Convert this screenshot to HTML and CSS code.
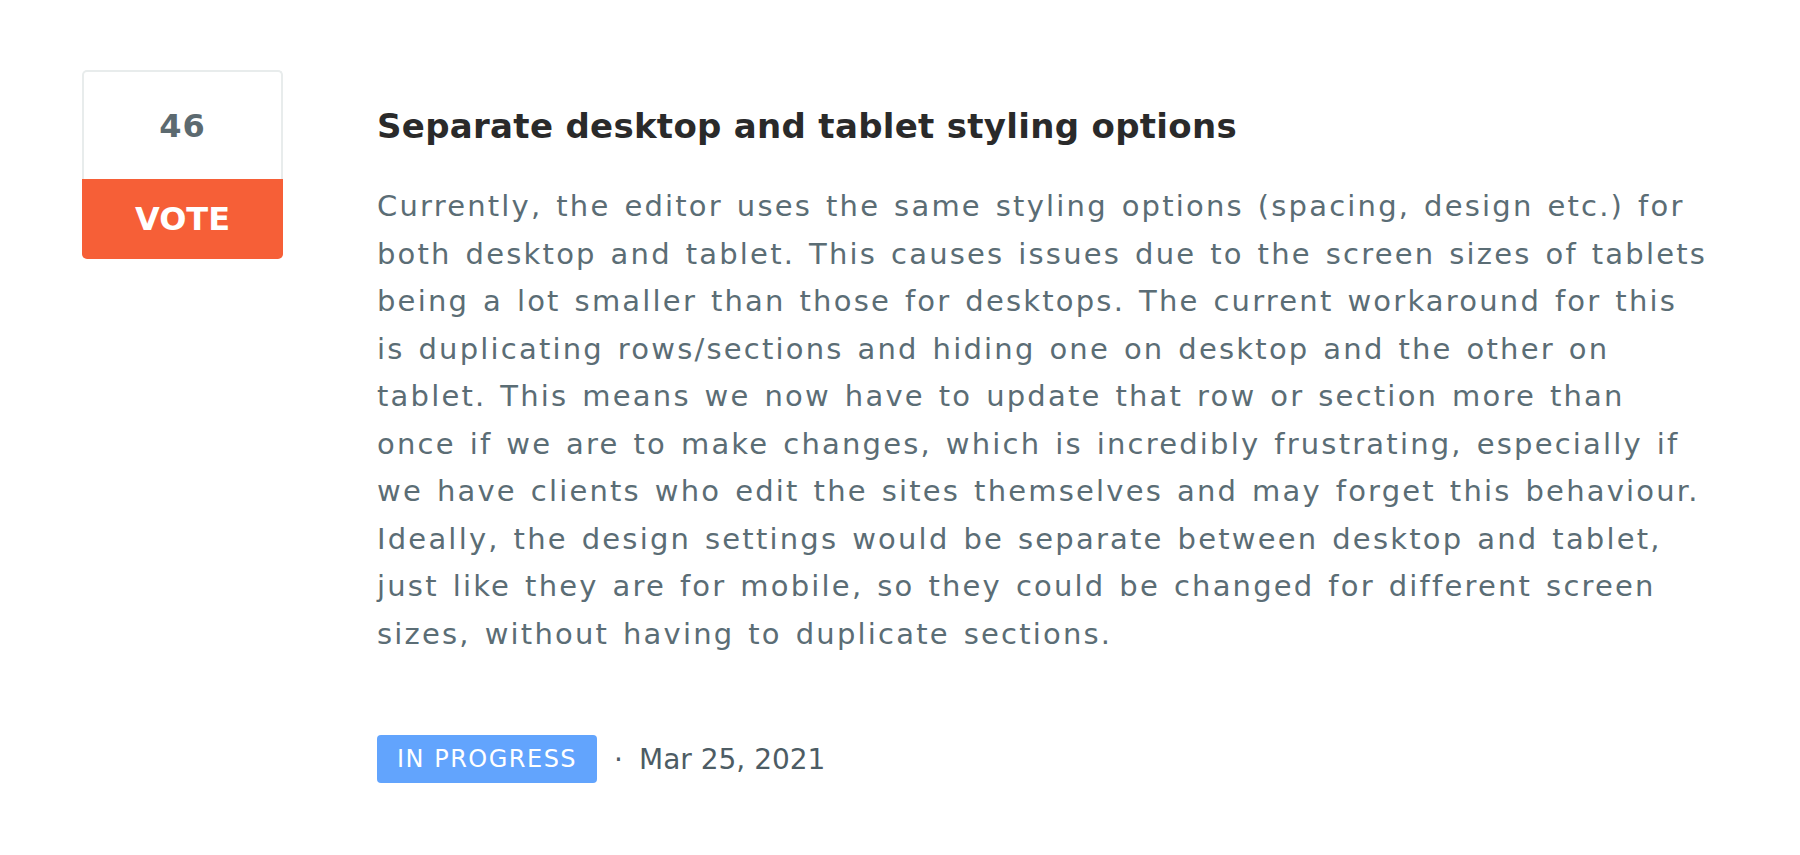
FILE: index.html
```html
<!DOCTYPE html>
<html lang="en">
<head>
<meta charset="utf-8">
<title>Feature request</title>
<link rel="stylesheet" href="styles.css">
</head>
<body>
<div class="post">
  <div class="vote">
    <div class="vote-count">46</div>
    <div class="vote-btn">VOTE</div>
  </div>
  <div class="content">
    <h1 class="title">Separate desktop and tablet styling options</h1>
    <p class="desc">Currently, the editor uses the same styling options (spacing, design etc.) for<br>both desktop and tablet. This causes issues due to the screen sizes of tablets<br>being a lot smaller than those for desktops. The current workaround for this<br>is duplicating rows/sections and hiding one on desktop and the other on<br>tablet. This means we now have to update that row or section more than<br>once if we are to make changes, which is incredibly frustrating, especially if<br>we have clients who edit the sites themselves and may forget this behaviour.<br>Ideally, the design settings would be separate between desktop and tablet,<br>just like they are for mobile, so they could be changed for different screen<br>sizes, without having to duplicate sections.</p>
    <div class="meta">
      <span class="badge">IN PROGRESS</span>
      <span class="dot">·</span>
      <span class="date">Mar 25, 2021</span>
    </div>
  </div>
</div>
</body>
</html>
```
FILE: styles.css
```css
html, body {
  margin: 0;
  padding: 0;
  background: #ffffff;
}
body {
  font-family: "DejaVu Sans", "Noto Sans", sans-serif;
}
.post {
  display: flex;
  align-items: flex-start;
  padding: 70px 0 0 82px;
}
.vote {
  width: 201px;
  flex-shrink: 0;
  margin-right: 94px;
}
.vote-count {
  box-sizing: border-box;
  height: 109px;
  border: 2px solid #e8ecec;
  border-bottom: none;
  border-radius: 5px 5px 0 0;
  display: flex;
  align-items: center;
  justify-content: center;
  font-size: 32px;
  font-weight: 700;
  letter-spacing: 1px;
  color: #5c6a70;
}
.vote-btn {
  height: 80px;
  background: #f65f37;
  border-radius: 0 0 5px 5px;
  display: flex;
  align-items: center;
  justify-content: center;
  color: #ffffff;
  font-size: 32px;
  font-weight: 700;
}
.content {
  flex: 1;
}
.title {
  margin: 36px 0 0;
  font-size: 34px;
  line-height: 41px;
  font-weight: 700;
  letter-spacing: 0.3px;
  color: #2a2a2a;
  white-space: nowrap;
}
.desc {
  margin: 36px 0 0;
  font-size: 29px;
  line-height: 47.5px;
  letter-spacing: 2.2px;
  word-spacing: 2.5px;
  color: #5b6d75;
  white-space: nowrap;
}
.meta {
  display: flex;
  align-items: center;
  margin-top: 77px;
}
.badge {
  height: 48px;
  display: flex;
  align-items: center;
  padding: 0 20px;
  background: #62a4fd;
  color: #ffffff;
  border-radius: 4px;
  font-size: 24px;
  letter-spacing: 1.5px;
}
.dot {
  margin: 0 16px 0 17px;
  font-size: 28px;
  color: #4d5c64;
}
.date {
  font-size: 28px;
  color: #4d5c64;
}
```
